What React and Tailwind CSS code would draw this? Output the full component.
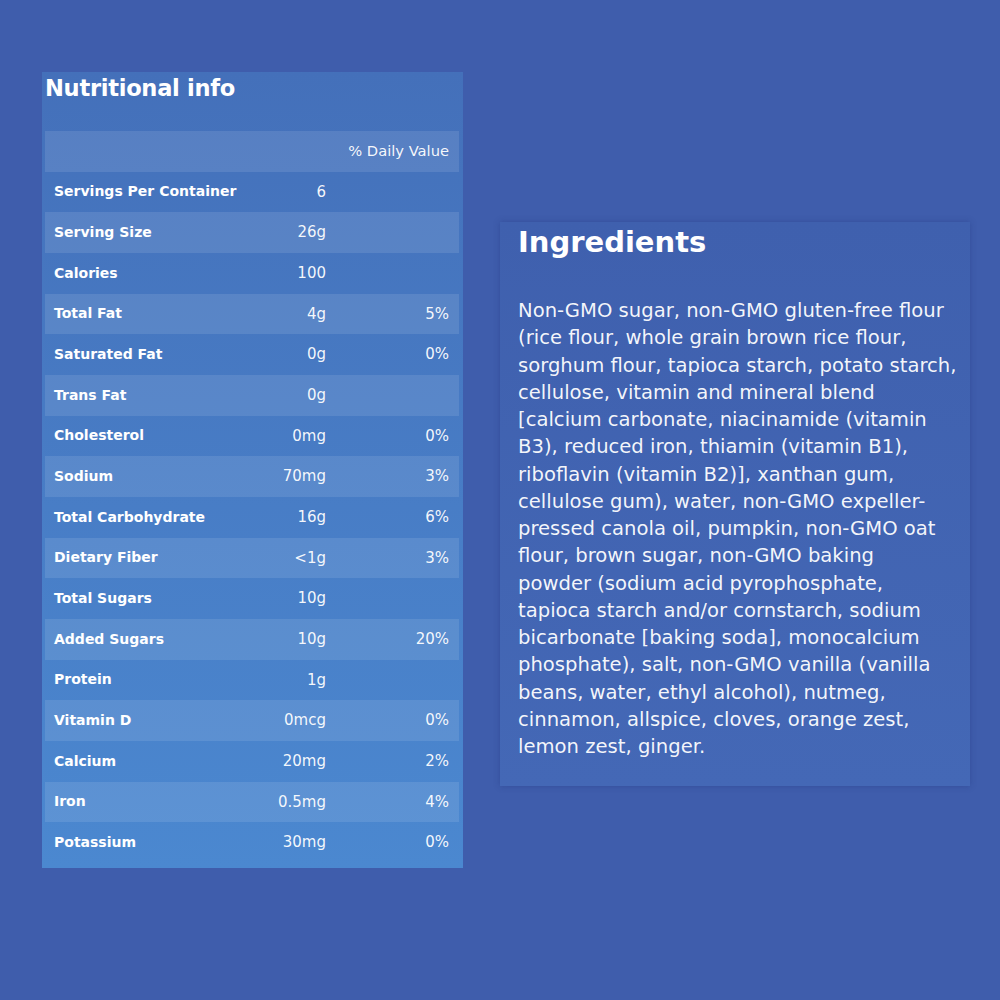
import React from "react";

const rows = [
  ["Servings Per Container", "6", ""],
  ["Serving Size", "26g", ""],
  ["Calories", "100", ""],
  ["Total Fat", "4g", "5%"],
  ["Saturated Fat", "0g", "0%"],
  ["Trans Fat", "0g", ""],
  ["Cholesterol", "0mg", "0%"],
  ["Sodium", "70mg", "3%"],
  ["Total Carbohydrate", "16g", "6%"],
  ["Dietary Fiber", "<1g", "3%"],
  ["Total Sugars", "10g", ""],
  ["Added Sugars", "10g", "20%"],
  ["Protein", "1g", ""],
  ["Vitamin D", "0mcg", "0%"],
  ["Calcium", "20mg", "2%"],
  ["Iron", "0.5mg", "4%"],
  ["Potassium", "30mg", "0%"],
];

const lines = [
  "Non-GMO sugar, non-GMO gluten-free flour",
  "(rice flour, whole grain brown rice flour,",
  "sorghum flour, tapioca starch, potato starch,",
  "cellulose, vitamin and mineral blend",
  "[calcium carbonate, niacinamide (vitamin",
  "B3), reduced iron, thiamin (vitamin B1),",
  "riboflavin (vitamin B2)], xanthan gum,",
  "cellulose gum), water, non-GMO expeller-",
  "pressed canola oil, pumpkin, non-GMO oat",
  "flour, brown sugar, non-GMO baking",
  "powder (sodium acid pyrophosphate,",
  "tapioca starch and/or cornstarch, sodium",
  "bicarbonate [baking soda], monocalcium",
  "phosphate), salt, non-GMO vanilla (vanilla",
  "beans, water, ethyl alcohol), nutmeg,",
  "cinnamon, allspice, cloves, orange zest,",
  "lemon zest, ginger.",
];

export default function App() {
  return (
    <div
      className="w-[1000px] h-[1000px] bg-[#3f5dac] text-white flex items-start"
      style={{ fontFamily: '"DejaVu Sans", sans-serif' }}
    >
      <div className="ml-[42px] mt-[72px] w-[421px] h-[796px] bg-gradient-to-b from-[#4470ba] to-[#4b88d0] px-[3px] flex flex-col">
        <h2 className="h-[59px] text-[22.6px] font-bold leading-[32px] tracking-[-0.3px]">Nutritional info</h2>
        <div className="flex flex-col w-[414px]">
          <div className="h-[40.67px] bg-white/10 flex items-center justify-end pr-[10px] text-[14.7px] text-white/95">% Daily Value</div>
          {rows.map((r, i) => (
            <div
              key={r[0]}
              className={
                "h-[40.67px] flex items-center text-[14px] " + (i % 2 === 1 ? "bg-white/10" : "")
              }
            >
              <div className="w-[210px] pl-[9px] font-semibold">{r[0]}</div>
              <div className="w-[71px] text-right text-[15px] text-white/95">{r[1]}</div>
              <div className="flex-1 text-right pr-[10px] text-[15px] text-white/95">{r[2]}</div>
            </div>
          ))}
        </div>
      </div>
      <div className="ml-[37px] mt-[222px] w-[470px] h-[564px] bg-gradient-to-b from-[#3f60ae] to-[#4468b6] shadow-[0_0_6px_rgba(30,50,120,0.35)] px-[18px] pt-[2px]">
        <h2 className="text-[29px] font-bold leading-[36px]">Ingredients</h2>
        <div className="mt-[37px] text-[19.6px] leading-[27.25px] text-white/95">
          {lines.map((l) => (
            <div key={l} className="whitespace-nowrap">{l}</div>
          ))}
        </div>
      </div>
    </div>
  );
}
